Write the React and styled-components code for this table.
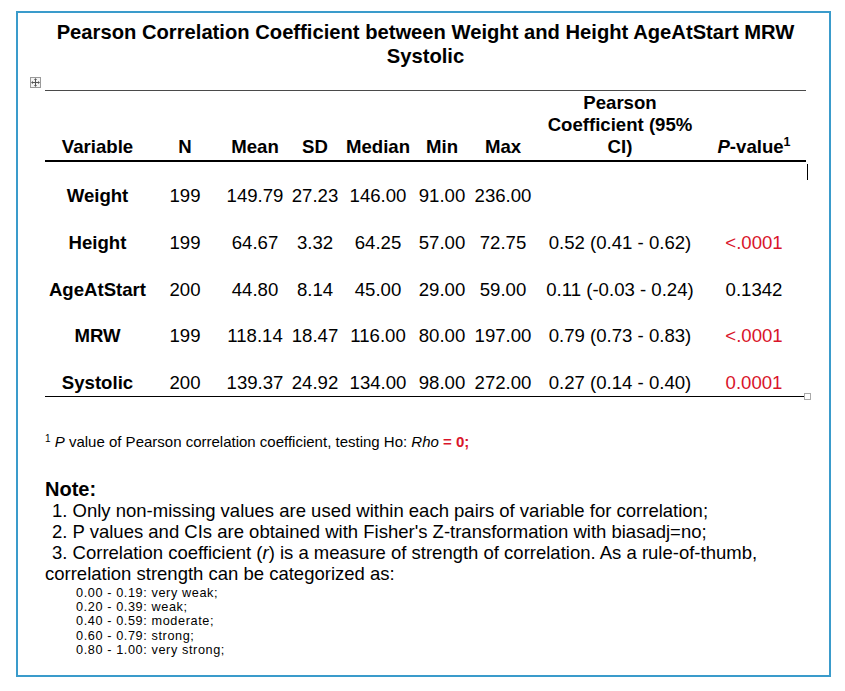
import React from "react";
import styled, { createGlobalStyle } from "styled-components";

const Global = createGlobalStyle`
  html, body { margin: 0; padding: 0; background: #fff; }
  body { font-family: "Liberation Sans", Arial, sans-serif; color: #000; }
`;

const Frame = styled.div`
  box-sizing: border-box;
  margin: 11px 0 0 16px;
  width: 815px;
  height: 666px;
  border: 2px solid #3a9bcb;
  padding: 7px 23px 0 27px;
`;

const Title = styled.h1`
  margin: 0;
  font-size: 20.2px;
  line-height: 24px;
  font-weight: bold;
  text-align: center;
  white-space: nowrap;
`;

const TableWrap = styled.div`
  position: relative;
  margin-top: 22px;
`;

const MoveHandle = styled.div`
  position: absolute;
  left: -15px;
  top: -13px;
  width: 9px;
  height: 9px;
  border: 1px solid #9a9a9a;
  background: #f4f4f4;
  display: flex;
  align-items: center;
  justify-content: center;
`;

const ResizeHandle = styled.div`
  position: absolute;
  right: -5px;
  bottom: -3px;
  width: 5px;
  height: 5px;
  border: 1px solid #aaa;
  background: #fff;
`;

const Caret = styled.div`
  position: absolute;
  right: -2px;
  top: 74px;
  width: 1px;
  height: 16px;
  background: #000;
`;

const Table = styled.table`
  width: 761px;
  table-layout: fixed;
  border-collapse: separate;
  border-spacing: 0;
  border-top: 1px solid #4a4a4a;
  font-size: 18.6px;
`;

const Th = styled.th`
  vertical-align: bottom;
  text-align: center;
  font-weight: bold;
  line-height: 22px;
  padding: 1px 0 2px;
  border-bottom: 2px solid #000;
  white-space: nowrap;
`;

const Td = styled.td`
  text-align: center;
  vertical-align: bottom;
  line-height: 20px;
  padding: 24px 0 2.8px;
  white-space: nowrap;
  font-weight: ${(p) => (p.$bold ? "bold" : "normal")};
  color: ${(p) => (p.$red ? "#d9142a" : "#000")};
  border-bottom: ${(p) => (p.$last ? "1px solid #000" : "none")};
`;

const Sup = styled.sup`
  font-size: 12.5px;
  line-height: 0;
  vertical-align: 7px;
`;

const FootSup = styled.sup`
  font-size: 10px;
  line-height: 0;
  vertical-align: 5px;
`;

const Footnote = styled.p`
  margin: 37px 0 0;
  font-size: 15px;
  line-height: 16px;
`;

const Red = styled.span`
  color: #d9142a;
  font-weight: bold;
`;

const NoteHead = styled.h2`
  margin: 28px 0 0;
  font-size: 20px;
  line-height: 22px;
  font-weight: bold;
`;

const NoteItem = styled.p`
  margin: 0;
  font-size: 18.5px;
  line-height: 21px;
  text-indent: ${(p) => (p.$flush ? "0" : "7px")};
  white-space: nowrap;
`;

const Scale = styled.ul`
  list-style: none;
  margin: 2px 0 0;
  padding: 0 0 0 31px;
  font-size: 12.7px;
  letter-spacing: 0.6px;
  line-height: 14.2px;
`;

const cols = [105, 70, 70, 50, 76, 52, 70, 164, 104];

const rows = [
  ["Weight", "199", "149.79", "27.23", "146.00", "91.00", "236.00", "", ""],
  ["Height", "199", "64.67", "3.32", "64.25", "57.00", "72.75", "0.52 (0.41 - 0.62)", "<.0001"],
  ["AgeAtStart", "200", "44.80", "8.14", "45.00", "29.00", "59.00", "0.11 (-0.03 - 0.24)", "0.1342"],
  ["MRW", "199", "118.14", "18.47", "116.00", "80.00", "197.00", "0.79 (0.73 - 0.83)", "<.0001"],
  ["Systolic", "200", "139.37", "24.92", "134.00", "98.00", "272.00", "0.27 (0.14 - 0.40)", "0.0001"],
];

const redP = (v) => v === "<.0001" || v === "0.0001";

export default function App() {
  return (
    <>
      <Global />
      <Frame>
        <Title>
          Pearson Correlation Coefficient between Weight and Height AgeAtStart MRW
          <br />
          Systolic
        </Title>
        <TableWrap>
          <MoveHandle>
            <svg width="9" height="9" viewBox="0 0 9 9" fill="#555">
              <rect x="4" y="1" width="1" height="7" />
              <rect x="1" y="4" width="7" height="1" />
              <path d="M4.5 0 L6 2 L3 2 Z" />
              <path d="M4.5 9 L6 7 L3 7 Z" />
              <path d="M0 4.5 L2 3 L2 6 Z" />
              <path d="M9 4.5 L7 3 L7 6 Z" />
            </svg>
          </MoveHandle>
          <Caret />
          <ResizeHandle />
          <Table>
            <colgroup>
              {cols.map((w, i) => (
                <col key={i} style={{ width: w }} />
              ))}
            </colgroup>
            <thead>
              <tr>
                <Th>Variable</Th>
                <Th>N</Th>
                <Th>Mean</Th>
                <Th>SD</Th>
                <Th>Median</Th>
                <Th>Min</Th>
                <Th>Max</Th>
                <Th>
                  Pearson
                  <br />
                  Coefficient (95%
                  <br />
                  CI)
                </Th>
                <Th>
                  <i>P</i>-value<Sup>1</Sup>
                </Th>
              </tr>
            </thead>
            <tbody>
              {rows.map((r, ri) => (
                <tr key={r[0]}>
                  {r.map((c, ci) => (
                    <Td
                      key={ci}
                      $bold={ci === 0}
                      $red={ci === 8 && redP(c)}
                      $last={ri === rows.length - 1}
                    >
                      {c}
                    </Td>
                  ))}
                </tr>
              ))}
            </tbody>
          </Table>
        </TableWrap>
        <Footnote>
          <FootSup>1</FootSup> <i>P</i> value of Pearson correlation coefficient, testing Ho: <i>Rho</i> <Red>= 0;</Red>
        </Footnote>
        <NoteHead>Note:</NoteHead>
        <NoteItem>1. Only non-missing values are used within each pairs of variable for correlation;</NoteItem>
        <NoteItem>2. P values and CIs are obtained with Fisher's Z-transformation with biasadj=no;</NoteItem>
        <NoteItem>
          3. Correlation coefficient (<i>r</i>) is a measure of strength of correlation. As a rule-of-thumb,
        </NoteItem>
        <NoteItem $flush>correlation strength can be categorized as:</NoteItem>
        <Scale>
          <li>0.00 - 0.19: very weak;</li>
          <li>0.20 - 0.39: weak;</li>
          <li>0.40 - 0.59: moderate;</li>
          <li>0.60 - 0.79: strong;</li>
          <li>0.80 - 1.00: very strong;</li>
        </Scale>
      </Frame>
    </>
  );
}
